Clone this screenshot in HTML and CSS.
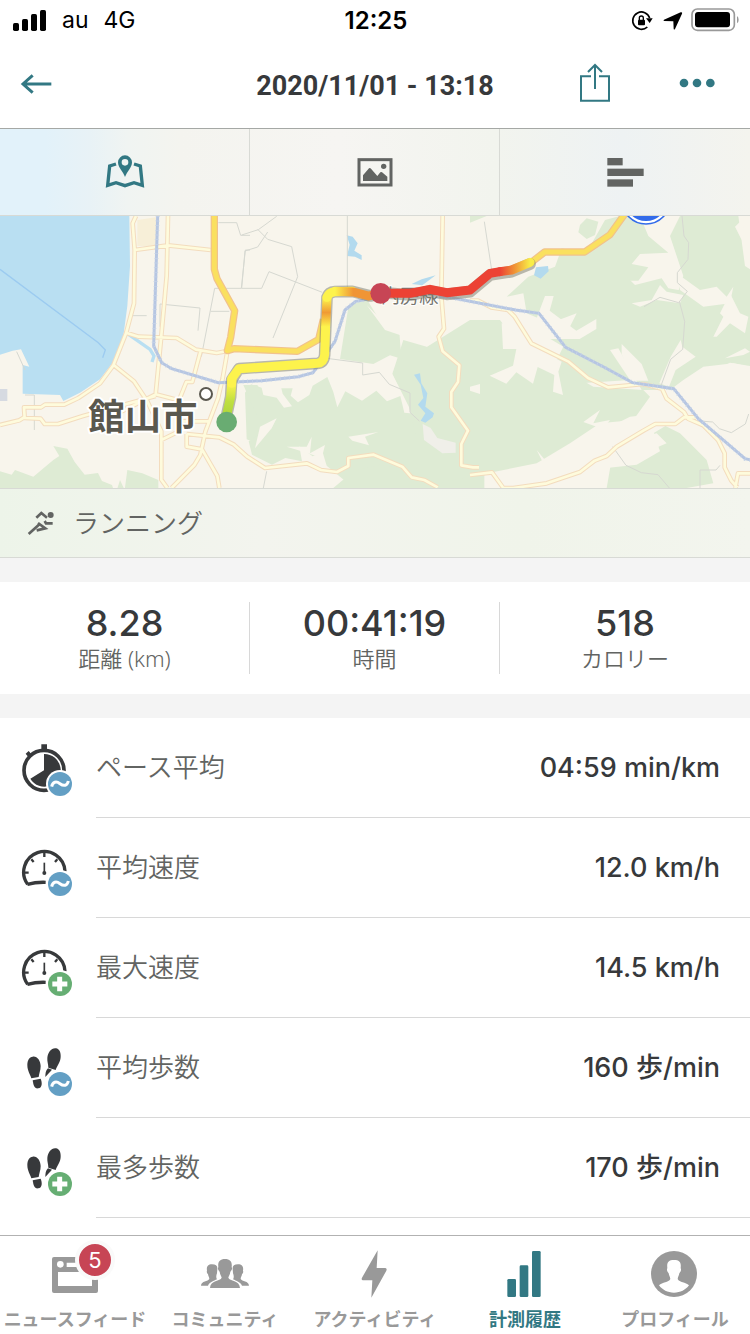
FILE: index.html
```html
<!DOCTYPE html>
<html lang="ja">
<head>
    <meta charset="UTF-8">
    <meta name="viewport" content="width=device-width, initial-scale=1.0">
    <title>2020/11/01 - 13:18</title>
    <link rel="stylesheet" href="styles.css">
</head>
<body>
    <!-- Shared icons -->
    <svg class="symbols" aria-hidden="true">
        <symbol id="gauge" viewBox="60 38 162 180">
            <g fill="none" stroke="#37393b">
                <path d="M83 177A62 62 0 1 1 195 138M82 177q26-7 55-6" stroke-width="10"/>
                <path d="M74 142h12M133 82v13M94 102l7 8M172 102l-7 8" stroke-width="7"/>
                <path d="M133 112v30" stroke-width="5"/>
            </g>
            <circle cx="133" cy="143" r="6" fill="#37393b"/>
        </symbol>
        <symbol id="steps" viewBox="60 38 162 180">
            <g fill="#37393b">
                <path d="M98 94c14-2 23 12 24 28 0 14-5 22-6 33l-22 4c-3-12-12-22-12-40 0-14 6-24 16-25z"/>
                <path d="M98 165l24-5c5 12 5 27-7 29-12 2-15-10-17-24z"/>
                <path d="M168 69c-14-2-24 12-26 28-1 12 3 18 3 30l22 7c5-14 14-22 15-39 1-14-4-24-14-26z"/>
                <path d="M144 129l12 4-20 22c0-10 1-20 8-26z"/>
            </g>
        </symbol>
        <symbol id="badge-avg" viewBox="60 38 162 180">
            <circle cx="180" cy="176" r="42" fill="#fff"/>
            <circle cx="180" cy="176" r="36" fill="#639fc4"/>
            <path d="M155 184c3-15 14-17 25-9s22 7 25-8" fill="none" stroke="#fff" stroke-width="9"/>
        </symbol>
        <symbol id="badge-max" viewBox="60 38 162 180">
            <circle cx="180" cy="176" r="42" fill="#fff"/>
            <circle cx="180" cy="176" r="36" fill="#66ae73"/>
            <path d="M157 176h45M179 154v44" fill="none" stroke="#fff" stroke-width="15"/>
        </symbol>
    </svg>

    <!-- Status bar -->
    <div class="status-bar">
        <div class="carrier">
            <svg width="35" height="23" viewBox="36 24 105 69">
                <rect x="39" y="66" width="18" height="24" rx="5"/>
                <rect x="66" y="54" width="18" height="36" rx="5"/>
                <rect x="93" y="39" width="18" height="51" rx="5"/>
                <rect x="120" y="27" width="18" height="63" rx="5"/>
            </svg>
            <span>au</span>
            <span>4G</span>
        </div>
        <div class="clock">12:25</div>
        <div class="indicators">
            <svg width="110" height="28" viewBox="765 18 330 84">
                <path d="M824 54A26 26 0 1 0 817 81" fill="none" stroke="#000" stroke-width="5"/>
                <path d="M813 55h20l-9 14z"/>
                <rect x="789" y="59" width="21" height="17" rx="3"/>
                <path d="M793 60v-6a6 6 0 0 1 12 0v6" fill="none" stroke="#000" stroke-width="4"/>
                <path d="M867 59l50-22q6-2 4 4l-21 46q-3 4-4-1l-1-22-27-1q-5-1-1-4z"/>
                <rect x="951" y="27" width="127" height="64" rx="16" fill="none" stroke="#999" stroke-width="5"/>
                <rect x="960" y="36" width="105" height="46" rx="9"/>
                <path d="M1086 48q5 3 5 11t-5 11z" fill="#999"/>
            </svg>
        </div>
    </div>

    <header class="header">
        <button class="icon-button" aria-label="戻る">
            <svg width="32" height="22" viewBox="60 220 96 66" fill="none" stroke="#327883" stroke-width="9">
                <path d="M154 253H70M98 227L69 253l29 26"/>
            </svg>
        </button>
        <h1>2020/11/01 - 13:18</h1>
        <div class="actions">
            <button class="icon-button" aria-label="共有">
                <svg width="32" height="40" viewBox="612 188 96 120" fill="none" stroke="#327883" stroke-width="6">
                    <path d="M648 228H618v73h84v-73h-30M660 266V194M639 215l21-21 21 21"/>
                </svg>
            </button>
            <button class="icon-button" aria-label="メニュー">
                <svg width="36" height="10" viewBox="912 234 108 30" fill="#327883">
                    <circle cx="927" cy="249" r="13"/>
                    <circle cx="966" cy="249" r="13"/>
                    <circle cx="1006" cy="249" r="13"/>
                </svg>
            </button>
        </div>
    </header>

    <main class="content">
        <div class="view-tabs">
            <button class="view-tab" aria-label="地図">
                <svg width="42" height="36" viewBox="312 86 126 108">
                    <path d="M348 116l-19 6-6 58 25-8 27 9 27-9 25 8-6-58-19-6" fill="none" stroke="#327883" stroke-width="10"/>
                    <path fill-rule="evenodd" fill="#327883" d="M375 90a21 21 0 0 1 21 21c0 16-15 28-21 44-6-16-21-28-21-44a21 21 0 0 1 21-21zm0 11a10 10 0 1 0 0 20 10 10 0 0 0 0-20z"/>
                </svg>
            </button>
            <button class="view-tab" aria-label="写真">
                <svg width="42" height="36" viewBox="1062 86 126 108" fill="#626462">
                    <rect x="1077" y="103" width="96" height="76" fill="none" stroke="#626462" stroke-width="9"/>
                    <path d="M1089 167v-17l18-21q3-2 6 1l19 22 9-11q4-2 7 1l14 12v13z"/>
                    <circle cx="1151" cy="123" r="8"/>
                </svg>
            </button>
            <button class="view-tab" aria-label="ラップ">
                <svg width="42" height="36" viewBox="687 86 126 108" fill="#626462">
                    <rect x="697" y="98" width="46" height="22"/>
                    <rect x="697" y="130" width="109" height="22"/>
                    <rect x="697" y="162" width="77" height="22"/>
                </svg>
            </button>
        </div>

        <!-- Map -->
        <svg class="map" viewBox="0 18 2250 816" preserveAspectRatio="xMidYMid slice" role="img" aria-label="館山市">
            <defs>
                <linearGradient id="startFade" gradientUnits="userSpaceOnUse" x1="0" y1="610" x2="0" y2="520">
                    <stop offset="0" stop-color="#b1d83c"/>
                    <stop offset=".4" stop-color="#bfdf40"/>
                    <stop offset="1" stop-color="#fdf34c"/>
                </linearGradient>
                <linearGradient id="upFade" gradientUnits="userSpaceOnUse" x1="0" y1="350" x2="0" y2="265">
                    <stop offset="0" stop-color="#fdf34c"/>
                    <stop offset=".5" stop-color="#f09a34"/>
                    <stop offset="1" stop-color="#fdf34c"/>
                </linearGradient>
                <linearGradient id="midFade" gradientUnits="userSpaceOnUse" x1="1005" y1="0" x2="1060" y2="0">
                    <stop offset="0" stop-color="#fdf34c"/>
                    <stop offset="1" stop-color="#f09535"/>
                </linearGradient>
                <linearGradient id="endFade" gradientUnits="userSpaceOnUse" x1="1500" y1="0" x2="1590" y2="0">
                    <stop offset="0" stop-color="#ec4234"/>
                    <stop offset=".5" stop-color="#f09535"/>
                    <stop offset="1" stop-color="#f8ed48"/>
                </linearGradient>
                <path id="roads" d="M408 18l-10 22 6 80-2 160-24 90-38 96-40 54-65 44-42 20h-58l-12 8H72l2 32 48 2 12 16h40l75-24 218-60M0 645l58-14 16-10M404 120l100-14 128 14M504 18l-4 180-18 200-15 155-120 60M378 368l38 12 114 4 58 35 62 10 32-6M342 466l60 48 40 60 42 90v145l18 25M467 553l70 18 22-55 18 0 25-94M682 425l-14 80-14 60-38 100-15 70-18 30-68 69M484 690l45-22 20-34h78M560 672l98 10 44 22 40 36 53 34 126-14 42 20 48 6 34-18v-24l76-10 86 36 28 32 38 8 40 22M560 672v38l46 8 46 80 6 36M1328 18l-4 240 8 98-16 24 12 44 50 42-4 50-20 30v46l50 70-20 40v64l35 6h18M1410 272h24l40 20 50 8 20 20 50 80 110 54 60 50 60 28 106-10 56 14 14 30 52 40 12 20 46 20 44 44 20 40v42l20 40 18 20M2250 790h-36l-8 44M1410 795l66-8 34 47h30l100-14 100-34 44-34 36-14 30-28 80-48 36-20h60l26-20h36"/>
                <path id="rail" d="M473 18l-12 390 24 50 30 18 140 42 130-6 110-12 44-12 66-94 30-94 32-26 110-20 170 8 200 38 70 10 80 102 120 62 80 44 124 18 74 90 140 120 60 14 40-12"/>
                <path id="highway" d="M643 18v160l8 28 53 96-12 80-10 40 20-6 190 8 64-36 14-60M1590 160l44-34h120l76-52 50-70"/>
            </defs>
            <rect width="2250" height="834" fill="#f8f5ec"/>

            <!-- sea and ferry line -->
            <path d="M0 18H388l2 150-8 120-12 90-28 75-42 55-60 40-50 25-10-18-112-4V465l20 5-25-52-25 4-38 12z" fill="#b9dff2"/>
            <path d="M0 178L295 398l21 22-8 23" fill="none" stroke="#9ccbf0" stroke-width="4"/>
            <path d="M378 368l72 50 12 20-6 18" fill="none" stroke="#b9dff2" stroke-width="10"/>
            <path d="M0 537h22v36H0z" fill="#d6dae1"/>
            <path d="M412 30l56-8v86h-56z" fill="#f7efd8"/>

            <!-- forest -->
            <g fill="#deebd4">
                <path d="M0 784l35 10 10-14 55 20 60-50 18-12-18-30 42 8 22 40 30 38 40-5 12 24 30 12 10 30 14-45 14 30 8-60 45 10 48 20v44H0z"/>
                <path d="M735 548l18-25 32 10 5 22-15 25 5 40 20 50-30 30-30-12z"/>
                <g transform="translate(570 0)">
                    <path d="M160 525l42 0 18 30 40 8 22 30 24-4-28-38-4-16 34 0-6 22 22 20 34-22 10-28 44-26 18 45 12 46 24-48 50 28 43-30 32 32 40-16 12 50 40 4 10 50 20 14 20 60 30 26 80-60 40 20v120H450l20-25-60-50-12-40-30 12-40-30 8 45-50-10-40 20-60-30-10-40 30-20 0-45z"/>
                    <path d="M474 298l18-18 40-10 36 60 60 36 6 80-34-10-50 26-100-15z"/>
                    <path d="M640 390l70 20 60 56 36-30 8 90-35 60 5 60 55 55-22 60-90-20-50-70-20-80-50-100z"/>
                    <path d="M430 834l60-50 80-20 60 10 90 50 20 10zM840 350v230l-40-90-50-80z"/>
                </g>
                <path d="M1410 330l90 0 60 80 100 50 120 70 150 10 20 20-50 70-100 10-90 60-100 60-300 60h-60V430z"/>
                <g transform="translate(1410 0)">
                    <path d="M0 18h50L0 38zM330 45l20-20 35 10-10 40-25 12-25-20zM405 30l45-12h60l25 60 60 50-85 4-25 30 50 10-30 40-55 0-5 36-55 40 30-90-20-30-90 30z"/>
                    <path d="M175 200l80-30 20-55 90 20 60-70 40 130 30 30 80-20 20 30 60 10-30 60 50 40-40 110-40 20-20 65-60 0-70-125 -25 5 60 90-150 10-80-50 30-60-50-30 60-10 30-60-80 30-70-30-10-60-50 10z"/>
                    <path d="M630 18h175l20 150 15 10v290l-60-10-100 50-40 50-70-30 40-100-20-80 50-150-40-120z"/>
                    <path d="M570 640l60 30 80 80 20 70-80 14h-260l20-60 90-10 70-40-20-60z"/>
                </g>
            </g>

            <!-- clearings in the hills -->
            <g fill="#f8f5ec">
                <g transform="translate(570 0)">
                    <path d="M210 650l50-25-15 30-50 60zM290 710l60 0 15-30-5 50 45-25-10 40-40-15zM475 680l90-14-40 14 12 26-50-14z"/>
                    <path d="M530 285l40 40 60 35 15 20-60-20z"/>
                </g>
                <g transform="translate(1410 0)">
                    <path d="M225 258l26 0-12 44 80 60 60-35 0 30-50 30-100 0-70-50 40-10zM485 280l60-10 25-45 20 20 50 10-10 25-70-10-50 20zM455 402l60 60 20 50-50 0-30-80zM568 520l34-80 30-50 5 20 40 30-60 40-20 50z"/>
                    <path d="M95 340l40 0 60 70 80 45-10 30 14 70-30-10 4-50-50-24-14 50-50-34-30 34-50-24 70-30 10-50-40 0zM0 530l30-8 0 30-30-10zM620 190l70 50 50-10 30 30 20-30-10 50-80 10-70-50z"/>
                    <path d="M750 310l30-60 30 60 25 10-10 50-45-30-40 40-10 0 30-60zM640 510l60-40 90-10 50 10v240l-90-20-130-70-60-50zM765 445l60-30 15 10-20 10zM420 650l60-30 90-10 30 30-50 30-80 10zM480 690l80-20 30 30-70 30-60-10zM390 600l-20 40 50-10-60 80 20-60-40-14zM200 720l50 60-20 0zM380 740l50-20-20 114h-50z"/>
                    <path d="M700 560l140 20v254h-90l-30-100-60-70zM795 50l30-30-10 70z"/>
                </g>
            </g>

            <!-- lakes -->
            <g fill="#b3daee">
                <path d="M1040 76l18 4 15 20-10 22 22 14v14l-20-10-24-2 8-34zM1235 222l30-14 42-12-40 30zM1608 172l36-4 2 16-24 22-20-10zM1242 494l18-4 4 30 18 30-6 40 26 20-4 12-22 16-14-6 14-22-22-26 16-20-8-40z"/>
            </g>
            <path d="M1268 642l24 12 20 30 55 14v30l-40 2-55-40z" fill="#f0efe9"/>

            <!-- small lanes -->
            <path d="M655 38h55l12 38h28M750 120h-14l-12 115h-80l-40 205M632 304h56M480 350v-68l120 12-6 68M398 317h42M50 425l25 55M75 555h28v105M1042 18V232M725 75l50-16 55-40M773 58l30 30 72 22 18 90-74 184M803 66l-30 45-38 12-10 112h60l22-50 160 62M980 445l108 14v36l50-8 30 36 62 26v58l28 26M1453 35l22 145M2046 18l6 60 14 20-2 50-32 40v30l30 26-26 34-56-16-48 28M2038 274l16 60-6 84-36 30-30 82M2062 630l76 6 20 20 36 12 42-26 10-30M1838 710l40 56 46 22 50 6 34 40M2100 834v-54h48l12-14M790 834l10-50" fill="none" stroke="#d6d8d1" stroke-width="3"/>

            <!-- local roads -->
            <g fill="none" stroke-linejoin="round">
                <use href="#roads" stroke="#f3dcbe" stroke-width="14"/>
                <use href="#roads" stroke="#fefbdc" stroke-width="8"/>
            </g>

            <!-- railway -->
            <g fill="none">
                <use href="#rail" stroke="#b6c6e2" stroke-width="9"/>
                <use href="#rail" stroke="#c8d4e8" stroke-width="13" stroke-dasharray="2 12"/>
            </g>

            <!-- main roads -->
            <g fill="none" stroke-linejoin="round">
                <use href="#highway" stroke="#f1c28c" stroke-width="22"/>
                <use href="#highway" stroke="#fae05f" stroke-width="15"/>
            </g>

            <!-- place names -->
            <text class="rail-name" x="1142" y="280">内房線</text>
            <text class="city-name" x="265" y="660">館山市</text>
            <circle cx="618" cy="552" r="18" fill="#fff" stroke="#5a584f" stroke-width="6"/>

            <!-- recorded route -->
            <g fill="none" stroke-linecap="round" stroke-linejoin="round" stroke-width="27">
                <path d="M680 615l12-55 3-50 22-34 235-16q20-2 22-26l7-172q5-16 24-17l52-1 54 14 40-10 79 7 60-12 50 10 70-8 60-50 65-10 55-23" stroke="#77796c" stroke-opacity=".5" stroke-width="35"/>
                <path d="M680 615l12-55 4-50" stroke="url(#startFade)"/>
                <path d="M695 520l0-14 22-30 235-16q20-2 22-26l3-80" stroke="#fdf34c"/>
                <path d="M977 350l4-88" stroke="url(#upFade)"/>
                <path d="M981 262q5-16 24-17l52-1" stroke="#fdf34c"/>
                <path d="M1005 244l55 2 46 12 40-10" stroke="url(#midFade)"/>
                <path d="M1150 250l80 0 60-12 50 10 70-8 60-50 30-5" stroke="#ec4234"/>
                <path d="M1500 185l35-5 55-23" stroke="url(#endFade)"/>
            </g>
            <circle cx="680" cy="636" r="31" fill="#69ac72"/>
            <circle cx="1142" cy="250" r="31" fill="#c74555"/>
            <circle cx="1938" cy="-30" r="72" fill="#fff" stroke="#326bea" stroke-width="5"/>
            <circle cx="1938" cy="-30" r="63" fill="#326bea"/>
        </svg>

        <div class="activity">
            <svg width="28" height="28" viewBox="81 78 84 84" fill="none" stroke="#626462" stroke-width="8">
                <path d="M109 104l15-14 17 14M86 153l34-31M114 120l22 16-26 6M134 114l4 7h20"/>
                <circle cx="152" cy="96" r="9" fill="#626462" stroke="none"/>
            </svg>
            <span>ランニング</span>
        </div>

        <div class="summary">
            <div class="summary-item">
                <strong>8.28</strong>
                <span>距離 (km)</span>
            </div>
            <div class="summary-item">
                <strong>00:41:19</strong>
                <span>時間</span>
            </div>
            <div class="summary-item">
                <strong>518</strong>
                <span>カロリー</span>
            </div>
        </div>

        <ul class="details">
            <li>
                <svg class="detail-icon" viewBox="60 38 162 180">
                    <circle cx="132" cy="135" r="60" fill="none" stroke="#37393b" stroke-width="11"/>
                    <path d="M124 57h17v16h-17zM77 85l9-8 8 9-9 9z" fill="#37393b"/>
                    <path d="M132 135V86a49 49 0 1 1-41 74z" fill="#37393b"/>
                    <use href="#badge-avg" x="60" y="38" width="162" height="180"/>
                </svg>
                <span class="detail-label">ペース平均</span>
                <span class="detail-value">04:59 min/km</span>
            </li>
            <li>
                <svg class="detail-icon" viewBox="0 0 162 180">
                    <use href="#gauge"/>
                    <use href="#badge-avg"/>
                </svg>
                <span class="detail-label">平均速度</span>
                <span class="detail-value">12.0 km/h</span>
            </li>
            <li>
                <svg class="detail-icon" viewBox="0 0 162 180">
                    <use href="#gauge"/>
                    <use href="#badge-max"/>
                </svg>
                <span class="detail-label">最大速度</span>
                <span class="detail-value">14.5 km/h</span>
            </li>
            <li>
                <svg class="detail-icon" viewBox="0 0 162 180">
                    <use href="#steps"/>
                    <use href="#badge-avg"/>
                </svg>
                <span class="detail-label">平均歩数</span>
                <span class="detail-value">160 歩/min</span>
            </li>
            <li>
                <svg class="detail-icon" viewBox="0 0 162 180">
                    <use href="#steps"/>
                    <use href="#badge-max"/>
                </svg>
                <span class="detail-label">最多歩数</span>
                <span class="detail-value">170 歩/min</span>
            </li>
        </ul>
    </main>

    <!-- Bottom navigation -->
    <nav class="tab-bar">
        <a href="#">
            <span class="tab-icon">
                <svg width="60" height="48" viewBox="135 60 180 144">
                    <path fill="#999" fill-rule="evenodd" d="M162 81h126q6 0 6 6v96q0 6-6 6H162q-6 0-6-6V87q0-6 6-6zm12 45v42h102v-42zM200 98v13h76V98z"/>
                    <circle cx="181" cy="103" r="10" fill="#fff"/>
                </svg>
                <span class="count">5</span>
            </span>
            <span>ニュースフィード</span>
        </a>
        <a href="#">
            <svg width="60" height="48" viewBox="582 60 180 144" fill="#999">
                <path d="M672 87c16 0 22 9 20 24 3 6-1 11-4 14-1 9-5 12-6 18 4 11 34 7 35 31h-90c1-24 31-20 35-31-1-6-5-9-6-18-3-3-7-8-4-14-2-15 4-24 20-24z"/>
                <path d="M633 103c-13 0-17 8-15 19-2 5 1 8 3 11 1 7 4 9 4 14-4 8-24 5-25 20h21c5-11 17-14 27-19-3-4-3-11 0-18l1-13c1-9-4-14-16-14zM711 103c13 0 17 8 15 19 2 5-1 8-3 11-1 7-4 9-4 14 4 8 24 5 25 20h-21c-5-11-17-14-27-19 3-4 3-11 0-18l-1-13c-1-9 4-14 16-14z"/>
            </svg>
            <span>コミュニティ</span>
        </a>
        <a href="#">
            <svg width="60" height="48" viewBox="1035 60 180 144" fill="#999">
                <path d="M1133 61l-3 53h26q6 2 3 8l-45 81 3-52h-29q-5-2-2-8z"/>
            </svg>
            <span>アクティビティ</span>
        </a>
        <a href="#" class="active">
            <svg width="60" height="48" viewBox="360 60 180 144" fill="#327883">
                <rect x="397" y="147" width="26" height="54" rx="4"/>
                <rect x="434" y="106" width="26" height="95" rx="4"/>
                <rect x="471" y="63" width="26" height="138" rx="4"/>
            </svg>
            <span>計測履歴</span>
        </a>
        <a href="#">
            <svg width="60" height="48" viewBox="810 60 180 144">
                <circle cx="897" cy="132" r="69" fill="#999"/>
                <path d="M897 90c17 0 22 7 20 24 3 8-1 12-4 16-1 7-4 9-5 17 5 11 24 9 34 19-10 14-26 22-45 22s-35-8-45-22c10-10 29-8 34-19-1-8-4-10-5-17-3-4-7-8-4-16-2-17 3-24 20-24z" fill="#fff"/>
            </svg>
            <span>プロフィール</span>
        </a>
    </nav>
</body>
</html>
```
FILE: styles.css
```css
* {
    box-sizing: border-box;
}

body {
    margin: 0;
    height: 100vh;
    display: flex;
    flex-direction: column;
    overflow: hidden;
    font-family: Inter, "Noto Sans CJK JP", sans-serif;
    color: #37393b;
    background: #fff;
}

svg {
    display: block;
    flex: none;
}

button {
    background: none;
    border: none;
    padding: 0;
    cursor: pointer;
}

.symbols {
    position: absolute;
    width: 0;
    height: 0;
}

/* Status bar */
.status-bar {
    height: 40px;
    flex: none;
    padding: 0 10px 0 12px;
    display: grid;
    grid-template-columns: 1fr auto 1fr;
    align-items: center;
    color: #000;
    font-size: 23px;
}

.carrier {
    display: flex;
    align-items: center;
    gap: 15px;
}

.clock {
    font-size: 24px;
    font-weight: 600;
}

.indicators {
    display: flex;
    justify-content: flex-end;
}

/* Header */
.header {
    height: 89px;
    flex: none;
    padding: 0 35px 0 20px;
    display: grid;
    grid-template-columns: 1fr auto 1fr;
    align-items: center;
    border-bottom: 1px solid #a5a8a5;
}

.header h1 {
    margin: 0;
    padding: 4px 0 0 15px;
    font-family: Roboto, sans-serif;
    font-size: 27px;
    font-weight: 700;
}

.actions {
    padding-bottom: 2px;
    display: flex;
    justify-content: flex-end;
    align-items: center;
    gap: 68px;
}

/* Map area */
.content {
    flex: 1;
    min-height: 0;
    overflow: hidden;
    background: #f4f4f4;
}

.view-tabs {
    height: 87px;
    display: grid;
    grid-template-columns: repeat(3, 1fr);
    border-bottom: 1px solid #d8dad5;
    background: linear-gradient(to right, #e2f2fa 6%, #e8f2f6 12%, #f0f4f2 17%, #f4f4ef 24%, #f6f5f2 45%, #f2f4ee 66%, #eef2f3 83%, #f4f4ee 100%);
}

.view-tab {
    display: flex;
    align-items: center;
    justify-content: center;
    border-right: 1px solid #d8dad5;
}

.view-tab:last-child {
    border-right: none;
}

.map {
    width: 100%;
    height: 272px;
}

.city-name,
.rail-name {
    font-family: "Noto Sans CJK JP", sans-serif;
    paint-order: stroke;
    stroke: #fff;
    stroke-linejoin: round;
}

.city-name {
    font-size: 109px;
    font-weight: 700;
    fill: #5a584f;
    stroke-width: 12px;
}

.rail-name {
    font-size: 58px;
    fill: #77776f;
    stroke-width: 6px;
}

.activity {
    height: 70px;
    padding: 0 27px;
    display: flex;
    align-items: center;
    gap: 18px;
    border: solid #d8dad5;
    border-width: 1px 0;
    background: linear-gradient(to right, #edf4e9, #f3f4ee 35%, #f0f4ea 70%, #f3f5ee);
    color: #626462;
    font-size: 26px;
    font-weight: 350;
}

.activity span {
    padding-bottom: 4px;
}

/* Summary */
.summary {
    margin: 24px 0;
    padding: 20px 0;
    display: grid;
    grid-template-columns: repeat(3, 1fr);
    background: #fff;
}

.summary-item {
    height: 72px;
    display: flex;
    flex-direction: column;
    align-items: center;
    border-right: 1px solid #d8d8d8;
}

.summary-item:last-child {
    border-right: none;
}

.summary-item strong {
    font-size: 36px;
    font-weight: 500;
    line-height: 42px;
}

.summary-item span {
    font-family: "Noto Sans", "Noto Sans CJK JP", sans-serif;
    font-size: 22px;
    font-weight: 350;
    line-height: 28px;
    color: #626462;
}

/* Details */
.details {
    margin: 0;
    padding: 0 0 20px;
    list-style: none;
    background: #fff;
}

.details li {
    height: 100px;
    padding-left: 20px;
    display: flex;
    align-items: center;
}

.detail-icon {
    width: 54px;
    height: 60px;
    margin-right: 22px;
}

.detail-label,
.detail-value {
    height: 100px;
    border-bottom: 1px solid #d8d8d8;
    line-height: 99px;
}

.detail-label {
    flex: 1;
    color: #626462;
    font-size: 26px;
    font-weight: 350;
}

.detail-value {
    padding-right: 30px;
    font-size: 27px;
    font-weight: 500;
}

/* Bottom navigation */
.tab-bar {
    height: 99px;
    flex: none;
    padding-top: 14px;
    display: grid;
    grid-template-columns: repeat(5, 1fr);
    border-top: 1px solid #b2b2b2;
    background: #fff;
}

.tab-bar a {
    display: flex;
    flex-direction: column;
    align-items: center;
    gap: 8px;
    color: #999;
    font-size: 18px;
    font-weight: 700;
    line-height: 28px;
    text-decoration: none;
    white-space: nowrap;
}

.tab-bar a.active {
    color: #327883;
}

.tab-icon {
    position: relative;
}

.count {
    position: absolute;
    top: -10px;
    right: -10px;
    width: 40px;
    height: 40px;
    border: 4px solid #fafafa;
    border-radius: 50%;
    background: #c74555;
    color: #fff;
    font-size: 22px;
    font-weight: 400;
    line-height: 32px;
    text-align: center;
}
```
